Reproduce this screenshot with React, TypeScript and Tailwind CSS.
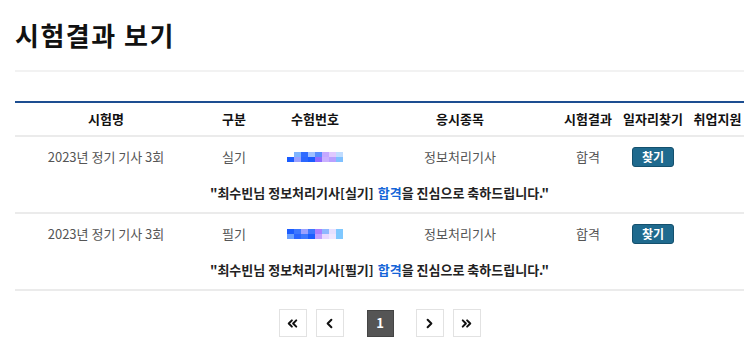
import { ChevronLeft, ChevronRight, ChevronsLeft, ChevronsRight } from 'lucide-react';

type Row = { name: string; kind: string; cells: string[][]; item: string; result: string };

// pixelated (blurred) exam numbers, drawn as mosaic blocks
const mosaicA: string[][] = [
  ['', '#7fb4ff', '#2f6bff', '#9fc0ff', '#5a8dff', '#c5a8ff', '#e0c8ff', '#c0dcff'],
  ['#1a5cff', '#9aa0ff', '#2a66ff', '#1a5cff', '#8f6bff', '#c9b0ff', '#b9a0ff', '#7fc0ff'],
];
const mosaicB: string[][] = [
  ['#1a5cff', '#3d77ff', '#9aa0ff', '#3d77ff', '#aa80ff', '#8fb8ff', '#e7e0ff', '#7fc8ff'],
  ['#6aa0ff', '#2a66ff', '#3d77ff', '#1a5cff', '#c0a0ff', '#e8d8ff', '#f0e8ff', '#7fc8ff'],
];

const rows: Row[] = [
  { name: '2023년 정기 기사 3회', kind: '실기', cells: mosaicA, item: '정보처리기사', result: '합격' },
  { name: '2023년 정기 기사 3회', kind: '필기', cells: mosaicB, item: '정보처리기사', result: '합격' },
];

function Mosaic({ cells }: { cells: string[][] }) {
  return (
    <svg width="56" height="10" viewBox="0 0 56 10" className="inline-block">
      {cells.map((line, r) =>
        line.map((c, i) => (c ? <rect key={`${r}-${i}`} x={i * 7} y={r * 5} width="7" height="5" fill={c} /> : null))
      )}
    </svg>
  );
}

const cols = 'grid grid-cols-[182px_74px_88px_202px_54px_76px_53px] items-center';

function PageBtn({ children, active }: { children: React.ReactNode; active?: boolean }) {
  return (
    <div
      className={
        active
          ? 'w-[27px] h-[27px] flex items-center justify-center bg-[#555555] text-white text-[13px] font-bold border border-[#444]'
          : 'w-[28px] h-[28px] flex items-center justify-center bg-white border border-[#e2e2e2] text-[#111]'
      }
    >
      {children}
    </div>
  );
}

export default function App() {
  return (
    <div className="w-[750px] h-[346px] bg-white overflow-hidden font-['Noto_Sans_CJK_KR',sans-serif] text-[#333]">
      <div className="pl-[15px] pr-[6px]">
        <h1 className="pt-[16px] h-[70px] text-[26px] leading-[38px] font-bold text-[#111] tracking-[1.5px]">시험결과 보기</h1>
        <div className="h-[2px] bg-[#f2f2f2]" />
        <div className="h-[29px]" />
        <div className="h-[2px] bg-[#1d4e91]" />

        {/* header */}
        <div className={`${cols} h-[32px] text-[13px] font-bold text-[#111] text-center`}>
          <div>시험명</div>
          <div>구분</div>
          <div>수험번호</div>
          <div>응시종목</div>
          <div>시험결과</div>
          <div>일자리찾기</div>
          <div>취업지원</div>
        </div>
        <div className="h-[2px] bg-[#ebebeb]" />

        {rows.map((row, idx) => (
          <div key={idx}>
            <div className={`${cols} h-[38px] pt-[1px] text-[13px] text-[#555] text-center`}>
              <div>{row.name}</div>
              <div>{row.kind}</div>
              <div className="flex justify-center">
                <Mosaic cells={row.cells} />
              </div>
              <div>{row.item}</div>
              <div>{row.result}</div>
              <div className="flex justify-center">
                <button className="w-[42px] h-[20px] rounded-[3px] bg-[#1f6a8e] border border-[#14506d] text-white text-[12px] font-bold leading-none">
                  찾기
                </button>
              </div>
              <div />
            </div>
            <div className="h-[37px] flex items-center justify-center text-[13px] font-bold text-[#222] pb-[2px]">
              "최수빈님 정보처리기사[{row.kind}] <span className="text-[#1565d8] ml-[4px]">합격</span>을 진심으로 축하드립니다."
            </div>
            <div className="h-[2px] bg-[#ebebeb]" />
          </div>
        ))}

        {/* pagination */}
        <div className="flex items-center justify-center pt-[18px]">
          <PageBtn>
            <ChevronsLeft size={15} strokeWidth={3.2} />
          </PageBtn>
          <div className="w-[9px]" />
          <PageBtn>
            <ChevronLeft size={15} strokeWidth={3.2} />
          </PageBtn>
          <div className="w-[23px]" />
          <PageBtn active>1</PageBtn>
          <div className="w-[22px]" />
          <PageBtn>
            <ChevronRight size={15} strokeWidth={3.2} />
          </PageBtn>
          <div className="w-[9px]" />
          <PageBtn>
            <ChevronsRight size={15} strokeWidth={3.2} />
          </PageBtn>
        </div>
      </div>
    </div>
  );
}
